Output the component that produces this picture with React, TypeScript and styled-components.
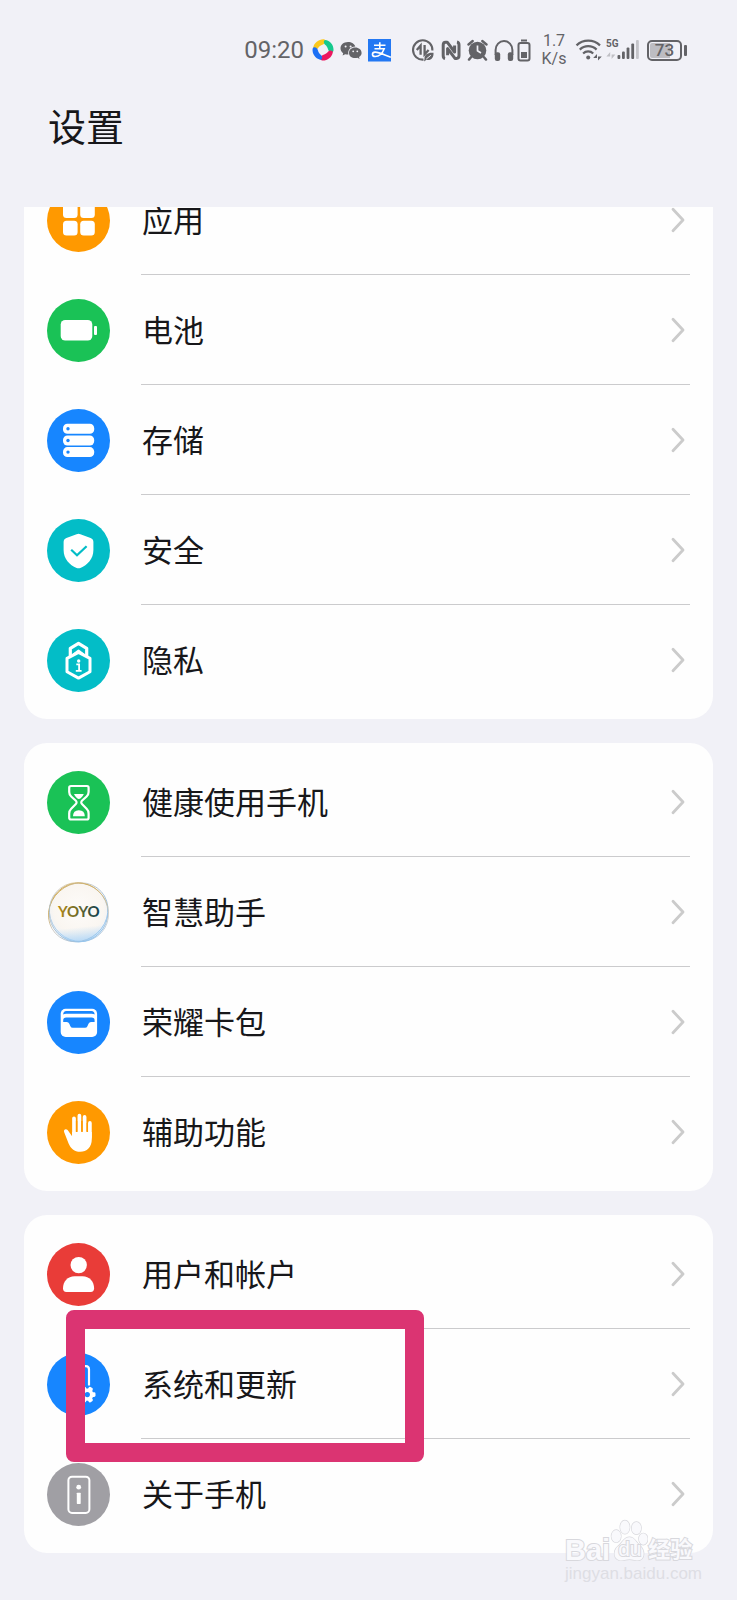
import React from "react";
import styled, { createGlobalStyle } from "styled-components";

const GlobalStyle = createGlobalStyle`
  * { box-sizing: border-box; }
  body {
    margin: 0;
    background: #f1f1f7;
    color: #17171a;
    font-family: Roboto, "Noto Sans CJK SC", sans-serif;
  }
`;

const Page = styled.div`
  position: relative;
  padding: 0 24px 47px;
`;

const StatusBar = styled.div`
  display: flex;
  align-items: center;
  justify-content: flex-end;
  height: 100px;
  padding-right: 26px;
  color: #636367;
`;

const Clock = styled.time`
  margin-right: 8px;
  font-size: 24px;
  line-height: 28px;
`;

const StatusGroup = styled.div<{ $gap: number; $after?: number }>`
  display: flex;
  align-items: center;
  gap: ${(p) => p.$gap}px;
  margin-right: ${(p) => p.$after ?? 0}px;
`;

const Glyph = styled.svg`
  display: block;
  flex: none;
`;

const Speed = styled.div`
  display: flex;
  flex-direction: column;
  align-items: center;
  width: 26px;
  font-size: 16px;
  line-height: 18px;
`;

const BatteryLevel = styled.div`
  display: flex;
  align-items: center;
  gap: 2px;
`;

const BatteryBody = styled.span`
  display: flex;
  align-items: center;
  justify-content: center;
  width: 35px;
  height: 21px;
  border: 2px solid #636367;
  border-radius: 5px;
  background: linear-gradient(to right, #bdbdc2 70%, transparent 70%) content-box;
  padding: 1px;
  font-size: 17px;
  font-weight: 500;
  line-height: 17px;
`;

const BatteryTip = styled.span`
  width: 3px;
  height: 11px;
  border-radius: 1px;
  background: #636367;
`;

const Title = styled.h1`
  margin: 0;
  padding: 0 24px;
  height: 107px;
  font-size: 38px;
  font-weight: 400;
  line-height: 56px;
`;

const Groups = styled.main`
  display: flex;
  flex-direction: column;
  gap: 24px;
`;

const Card = styled.ul<{ $scrolled?: boolean }>`
  margin: 0;
  padding: 4px 23px;
  list-style: none;
  background: #fefefe;
  border-radius: ${(p) => (p.$scrolled ? "0 0 23px 23px" : "23px")};
  overflow: ${(p) => (p.$scrolled ? "hidden" : "visible")};

  & > li:first-child {
    margin-top: ${(p) => (p.$scrolled ? "-46px" : "0")};
  }
`;

const Item = styled.li`
  position: relative;
`;

const RowLink = styled.a`
  display: flex;
  align-items: center;
  gap: 31px;
  height: 110px;
  color: inherit;
  text-decoration: none;
`;

const RowBody = styled.span<{ $last: boolean }>`
  display: flex;
  flex: 1;
  align-items: center;
  justify-content: space-between;
  height: 110px;
  padding-right: 5px;
  border-bottom: 1px solid ${(p) => (p.$last ? "transparent" : "#cbcbcd")};
`;

const Label = styled.span`
  padding: 4px 0 0 1px;
  font-size: 31px;
  line-height: 32px;
`;

const Highlight = styled.div`
  position: absolute;
  top: -19px;
  left: 19px;
  width: 358px;
  height: 152px;
  border: 19px solid #db3472;
  border-radius: 8px;
  pointer-events: none;
`;

const Watermark = styled.div`
  position: absolute;
  right: 40px;
  bottom: 14px;
  width: 132px;
  color: #f9f9fc;
  font-family: "Liberation Sans", "Noto Sans CJK SC", sans-serif;
  -webkit-text-stroke: 2px #d8d8dd;
  paint-order: stroke fill;
  pointer-events: none;
`;

const Brand = styled.div`
  display: flex;
  align-items: flex-end;
  height: 44px;
  font-weight: 700;
`;

const BrandText = styled.span<{ $size: number }>`
  font-size: ${(p) => p.$size}px;
  line-height: 24px;
`;

const Paw = styled.span`
  position: relative;
  display: flex;
  width: 38px;
  height: 44px;
`;

const PawText = styled.span`
  position: absolute;
  left: 8px;
  top: 19px;
  font-size: 21px;
  font-weight: 400;
  line-height: 24px;
`;

const Site = styled.div`
  font-size: 17px;
  line-height: 24px;
  color: #dedee4;
  -webkit-text-stroke: 0;
`;

const Disc = ({ color, children }: { color: string; children: React.ReactNode }) => (
  <Glyph width="63" height="63" viewBox="0 0 63 63" aria-hidden="true">
    <circle cx="31.5" cy="31.5" r="31.5" fill={color} />
    {children}
  </Glyph>
);

const ORANGE = "#ff9900";
const GREEN = "#1ac256";
const BLUE = "#1786ff";
const TEAL = "#03bdc7";
const RED = "#e93c38";
const GREY = "#a09fa4";

const AppsIcon = () => (
  <Disc color={ORANGE}>
    <g fill="#fff">
      <rect x="16" y="14.4" width="14.6" height="14.6" rx="3.5" />
      <rect x="33.2" y="14.4" width="14.6" height="14.6" rx="3.5" />
      <rect x="16" y="31.8" width="14.6" height="14.6" rx="3.5" />
      <rect x="33.2" y="31.8" width="14.6" height="14.6" rx="3.5" />
    </g>
  </Disc>
);

const BatteryIcon = () => (
  <Disc color={GREEN}>
    <rect x="13.7" y="21" width="31.6" height="20.6" rx="4.5" fill="#fff" />
    <rect x="47" y="27" width="3" height="9" rx="1" fill="#fff" />
  </Disc>
);

const StorageIcon = () => (
  <Disc color={BLUE}>
    {[14.8, 26.5, 38.1].map((y) => (
      <g key={y}>
        <rect x="16" y={y} width="31.2" height="10" rx="4.4" fill="#fff" />
        <circle cx="21" cy={y + 5} r="1.7" fill={BLUE} />
      </g>
    ))}
  </Disc>
);

const SecurityIcon = () => (
  <Disc color={TEAL}>
    <path d="M29.6 15.2Q31.5 14.3 33.4 15.2L43.6 19Q46.4 20 46.4 23V31C46.4 40 40.5 46 33.4 48.9Q31.5 49.7 29.6 48.9C22.5 46 16.6 40 16.6 31V23Q16.6 20 19.4 19Z" fill="#fff" />
    <path d="M24.2 30.8L30 36.3L39.6 27.2" fill="none" stroke={TEAL} strokeWidth="2.2" />
  </Disc>
);

const PrivacyIcon = () => (
  <Disc color={TEAL}>
    <g fill="none" stroke="#fff" strokeLinejoin="round">
      <path d="M23.3 28V19.3L31.5 14.3L39.7 19.3V28" strokeWidth="3.2" />
      <path d="M31.5 23.3L43 29.4V42.7L31.5 49.1L20 42.7V29.4Z" strokeWidth="3" />
      <path d="M26.2 25.5L31.5 21.5L36.8 25.5" strokeWidth="2" />
    </g>
    <circle cx="31.7" cy="32" r="1.7" fill="#fff" />
    <path d="M29.3 35.3H32.1V41.6M28.8 41.8H34.6" fill="none" stroke="#fff" strokeWidth="1.8" />
  </Disc>
);

const HourglassIcon = () => (
  <Disc color={GREEN}>
    <path
      d="M24 15H40Q41.6 15 41.6 16.7V21Q41.6 23.6 39.6 25.5L35.2 29.5Q33.3 31.4 35.2 33.3L39.6 37.8Q41.6 39.8 41.6 42.5V46.8Q41.6 48.5 40 48.5H24Q22.2 48.5 22.2 46.8V42.5Q22.2 39.8 24.2 37.8L28.6 33.3Q30.5 31.4 28.6 29.5L24.2 25.5Q22.2 23.6 22.2 21V16.7Q22.2 15 24 15Z"
      fill="none" stroke="#fff" strokeWidth="2.2"
    />
    <path d="M27 23.1H36.8Q35.9 25.7 33.7 27.2Q31.9 28.6 30.1 27.2Q27.9 25.7 27 23.1Z" fill="#fff" />
    <path d="M26 45.3Q26 39.2 31.9 39.2Q37.8 39.2 37.8 45.3Z" fill="#fff" />
  </Disc>
);

const YoyoIcon = () => (
  <Glyph width="63" height="63" viewBox="0 0 63 63" aria-hidden="true">
    <defs>
      <linearGradient id="bubbleRim" x1="0.3" y1="0" x2="0.6" y2="1">
        <stop offset="0" stopColor="#cfa544" />
        <stop offset="0.3" stopColor="#cfcac2" />
        <stop offset="0.75" stopColor="#a3c0da" />
        <stop offset="1" stopColor="#94c6f0" />
      </linearGradient>
      <radialGradient id="bubbleFill" cx="0.5" cy="0.45" r="0.55">
        <stop offset="0" stopColor="#fdfbf9" />
        <stop offset="0.75" stopColor="#faf6f1" />
        <stop offset="1" stopColor="#eef1f6" />
      </radialGradient>
      <linearGradient id="bubbleGlow" x1="0.4" y1="0" x2="0.5" y2="1">
        <stop offset="0.75" stopColor="#b5d8f6" stopOpacity="0" />
        <stop offset="1" stopColor="#b5d8f6" />
      </linearGradient>
      <linearGradient id="yoyoText" x1="0" y1="0" x2="1" y2="0">
        <stop offset="0" stopColor="#b88b17" />
        <stop offset="0.5" stopColor="#6c6928" />
        <stop offset="1" stopColor="#123f50" />
      </linearGradient>
    </defs>
    <circle cx="31.5" cy="31.5" r="29.8" fill="url(#bubbleFill)" />
    <circle cx="31.5" cy="31.5" r="29.8" fill="url(#bubbleGlow)" />
    <circle cx="31.5" cy="31.5" r="29.4" fill="none" stroke="url(#bubbleRim)" strokeWidth="1" />
    <ellipse cx="31.2" cy="31.3" rx="31" ry="28.2" transform="rotate(-42 31.2 31.3)" fill="none" stroke="url(#bubbleRim)" strokeWidth="0.9" />
    <ellipse cx="32" cy="31.1" rx="30.4" ry="28.6" transform="rotate(42 32 31.1)" fill="none" stroke="url(#bubbleRim)" strokeWidth="0.7" />
    <text x="31.8" y="36.4" textAnchor="middle" fontFamily="Lato, sans-serif" fontWeight="700" fontSize="15" fill="url(#yoyoText)">YOYO</text>
  </Glyph>
);

const WalletIcon = () => (
  <Disc color={BLUE}>
    <rect x="13.7" y="17.8" width="36.4" height="28.2" rx="5" fill="#fff" />
    <path d="M16.2 23.6Q16.2 20 19.4 20H44.4Q47.6 20 47.6 23.6Q46.6 22.7 44.6 22.7H19.2Q17.2 22.7 16.2 23.6Z" fill={BLUE} />
    <path d="M16.2 31V29.4Q16.2 26.6 19.2 26.6H44.6Q47.6 26.6 47.6 29.4V31H44Q42.3 31 41.5 32.8L40.4 35.3Q39.7 36.8 38 36.8H25.8Q24.1 36.8 23.4 35.3L22.3 32.8Q21.5 31 19.8 31Z" fill={BLUE} />
  </Disc>
);

const HandIcon = () => (
  <Disc color={ORANGE}>
    <g fill="none" stroke="#fff" strokeWidth="3.7" strokeLinecap="round">
      <path d="M27 17.3V34M32.4 14.7V34M37.6 15.9V34M42.9 21.9V36" />
    </g>
    <path d="M25.1 31H44.8V38C44.8 46.5 39.7 50.8 33.3 50.8C27.2 50.8 23.8 47.6 21.6 42.5L17.2 31.3C16.3 28.6 18.8 27.2 20.6 29L25.1 35.3Z" fill="#fff" />
    <path d="M29.6 20V30.4M34.9 20V30.4M40.3 22V30.4" stroke={ORANGE} strokeWidth="1.4" />
  </Disc>
);

const UserIcon = () => (
  <Disc color={RED}>
    <circle cx="31.7" cy="22.1" r="8.2" fill="#fff" />
    <path d="M16 45.3C16 38.5 20.7 33.2 27.6 33.2H35.5C42.4 33.2 47.1 38.5 47.1 45.3Q47.1 49 43.7 49H19.4Q16 49 16 45.3Z" fill="#fff" />
  </Disc>
);

const SystemIcon = () => (
  <Disc color={BLUE}>
    <path d="M42 32.5V16.4Q42 13.2 38.9 13.2H24.1Q21 13.2 21 16.4V46.6Q21 49.8 24.1 49.8H30" fill="none" stroke="#fff" strokeWidth="2.2" />
    <g fill="#fff">
      <circle cx="40.3" cy="41.6" r="6.2" />
      {[0, 60, 120, 180, 240, 300].map((a) => (
        <rect key={a} x="38" y="33.4" width="4.6" height="5" rx="1.4" transform={`rotate(${a + 30} 40.3 41.6)`} />
      ))}
    </g>
    <circle cx="40.3" cy="41.6" r="2.6" fill={BLUE} />
  </Disc>
);

const AboutIcon = () => (
  <Disc color={GREY}>
    <rect x="21.4" y="13.7" width="21" height="36.2" rx="3.6" fill="none" stroke="#fff" strokeWidth="2" />
    <circle cx="31.7" cy="24.2" r="2.4" fill="#fff" />
    <rect x="29.8" y="29.7" width="3.9" height="11.2" rx="0.6" fill="#fff" />
  </Disc>
);

const Chevron = () => (
  <Glyph width="14" height="26" viewBox="0 0 14 26" aria-hidden="true">
    <path d="M2 2.2L12 13L2 23.8" fill="none" stroke="#cbcbcb" strokeWidth="2.8" strokeLinecap="round" strokeLinejoin="round" />
  </Glyph>
);

type Entry = { label: string; icon: () => React.ReactElement; highlighted?: boolean };

const groups: { scrolled?: boolean; entries: Entry[] }[] = [
  {
    scrolled: true,
    entries: [
      { label: "应用", icon: AppsIcon },
      { label: "电池", icon: BatteryIcon },
      { label: "存储", icon: StorageIcon },
      { label: "安全", icon: SecurityIcon },
      { label: "隐私", icon: PrivacyIcon },
    ],
  },
  {
    entries: [
      { label: "健康使用手机", icon: HourglassIcon },
      { label: "智慧助手", icon: YoyoIcon },
      { label: "荣耀卡包", icon: WalletIcon },
      { label: "辅助功能", icon: HandIcon },
    ],
  },
  {
    entries: [
      { label: "用户和帐户", icon: UserIcon },
      { label: "系统和更新", icon: SystemIcon, highlighted: true },
      { label: "关于手机", icon: AboutIcon },
    ],
  },
];

const INK = "#636367";

const Status = () => (
  <StatusBar>
    <Clock>09:20</Clock>
    <StatusGroup $gap={6} $after={20}>
      <Glyph width="22" height="24" viewBox="0 0 22 24" aria-hidden="true">
        <path d="M1.2 9.8C2 4.6 7 1 12 1.3C15 2.2 13.4 5.6 11 6.6C8.2 7.6 7.4 8.6 5.8 10.4C4 12.2 1 12 1.2 9.8Z" fill="#fbc81e" />
        <path d="M13.8 2C18.8 3.2 22.2 8 21.4 13C20.2 15.8 17 14.4 16.2 11.8C15.4 9.2 14.8 8.2 12.8 6.6C11.2 4.8 11.6 1.8 13.8 2Z" fill="#16c98d" />
        <path d="M20.8 14.4C19.8 19.6 15 22.8 10 22.4C7 21.4 8.4 18 11 17C13.8 16 14.6 15.2 16.2 13.4C18 11.8 21 12.2 20.8 14.4Z" fill="#ec1760" />
        <path d="M8.2 21.8C3.2 20.4 0 15.8 .6 10.8C1.8 8.2 5 9.4 5.8 12C6.6 14.6 7.2 15.6 9.2 17.2C10.8 19 10.4 22 8.2 21.8Z" fill="#1c6ff5" />
      </Glyph>
      <Glyph width="22" height="24" viewBox="0 0 22 24" aria-hidden="true">
        <path d="M8 4C3.6 4 .5 6.8.5 10.3C.5 12.3 1.5 14 3.2 15.2L2.6 17.5L5.2 16.2C6.2 16.5 7.2 16.6 8.4 16.6C7.4 12 10.6 8.7 15.3 8.6C14.6 5.8 11.6 4 8 4Z" fill={INK} />
        <path d="M15.2 9.6C11.6 9.6 9 12 9 14.9C9 17.8 11.6 20.1 15.2 20.1C16 20.1 16.8 20 17.5 19.8L19.6 20.9L19 19C20.6 18 21.6 16.6 21.6 14.9C21.6 12 18.9 9.6 15.2 9.6Z" fill={INK} />
        <g fill="#f1f1f7">
          <circle cx="5.6" cy="8.4" r="1" /><circle cx="10.6" cy="8.4" r="1" />
          <circle cx="13.2" cy="13.3" r=".9" /><circle cx="17.3" cy="13.3" r=".9" />
        </g>
      </Glyph>
      <Glyph width="23" height="24" viewBox="0 0 23 24" aria-hidden="true">
        <rect y="1" width="23" height="22.5" fill="#2378f3" />
        <path d="M6 7.2H17.5M11.8 4.2V10.8M6.5 10.8H16.2C14.5 15.2 11 18.5 7.2 18.5C3.6 18.5 3.6 14.3 7 14.1C11 13.9 16 16.8 22.8 19.2" fill="none" stroke="#fff" strokeWidth="1.6" />
      </Glyph>
    </StatusGroup>
    <StatusGroup $gap={6} $after={10}>
      <Glyph width="24" height="24" viewBox="0 0 24 24" aria-hidden="true">
        <path d="M21.4 12.5A9.7 9.7 0 1 0 12.5 21.6" fill="none" stroke={INK} strokeWidth="2.1" />
        <path d="M9.6 16.8V7.6L5.8 12M13.6 7V16.4L17.6 12" fill="none" stroke={INK} strokeWidth="2.3" />
        <path d="M13.5 21C13.2 16.5 17 14.3 22.5 14.8C23 20 19.5 23 15.5 21.8L13 23.5Z" fill={INK} />
        <path d="M15.3 21L19.8 17.3" stroke="#f1f1f7" />
      </Glyph>
      <Glyph width="20" height="24" viewBox="0 0 20 24" aria-hidden="true">
        <path d="M4 20.6Q2.2 20.2 2.2 17.5V7Q2.2 4.2 4.6 4.2H6.2L13.6 14V7.6M16 4Q18 4.4 18 7V17.6Q18 20.4 15.6 20.4H14L6.6 10.6V17.2" fill="none" stroke={INK} strokeWidth="3" strokeLinejoin="round" />
      </Glyph>
      <Glyph width="21" height="24" viewBox="0 0 21 24" aria-hidden="true">
        <circle cx="10.5" cy="12.5" r="8.8" fill={INK} />
        <path d="M1.5 6.5L5.7 3M19.5 6.5L15.3 3M4.2 19L2 21.6M16.8 19L19 21.6" stroke={INK} strokeWidth="2.4" strokeLinecap="round" />
        <path d="M10.5 7.4V12.8L14 15" fill="none" stroke="#f1f1f7" strokeWidth="1.7" />
      </Glyph>
      <StatusGroup $gap={3}>
        <Glyph width="20" height="24" viewBox="0 0 20 24" aria-hidden="true">
          <path d="M1.6 17V12A8.4 9 0 0 1 18.4 12V17" fill="none" stroke={INK} strokeWidth="2" />
          <rect x=".8" y="14.2" width="5.4" height="8.8" rx="2.2" fill={INK} />
          <rect x="13.8" y="14.2" width="5.4" height="8.8" rx="2.2" fill={INK} />
        </Glyph>
        <Glyph width="14" height="24" viewBox="0 0 14 24" aria-hidden="true">
          <rect x="4" y="1.5" width="6" height="2" fill={INK} />
          <rect x="1.5" y="5" width="11" height="17.5" rx="2" fill="none" stroke={INK} strokeWidth="2" />
          <rect x="4" y="14" width="6" height="6" fill={INK} />
        </Glyph>
      </StatusGroup>
    </StatusGroup>
    <Speed>
      <span>1.7</span>
      <span>K/s</span>
    </Speed>
    <StatusGroup $gap={3} $after={7}>
      <Glyph width="36" height="24" viewBox="0 0 36 24" aria-hidden="true">
        <g fill="none" stroke={INK} strokeWidth="2.2">
          <path d="M9.5 7.4A17 17 0 0 1 33 7.4" />
          <path d="M12.8 11.6A12 12 0 0 1 29.6 11.6" />
          <path d="M16.1 15.5A7.3 7.3 0 0 1 26.2 15.5" />
        </g>
        <circle cx="21.2" cy="19.6" r="2" fill={INK} />
        <path d="M30 22V16L26.2 20H30ZM31 16V22.5L34.8 18.5H31Z" fill={INK} />
      </Glyph>
      <Glyph width="34" height="28" viewBox="0 0 34 28" aria-hidden="true">
        <text x="0" y="11" fontFamily="Roboto, sans-serif" fontWeight="700" fontSize="10" fill={INK}>5G</text>
        <path d="M4.2 23V16L.4 20.6H4.2ZM5.6 16V23L9.4 18.6H5.6Z" fill="#c0c0c5" />
        <g fill={INK}>
          <rect x="11.5" y="19" width="2.8" height="4" rx="1" />
          <rect x="16" y="15.5" width="2.8" height="7.5" rx="1" />
          <rect x="20.6" y="11.5" width="2.8" height="11.5" rx="1" />
          <rect x="25.3" y="7.5" width="2.8" height="15.5" rx="1" />
        </g>
        <rect x="30" y="4" width="2.8" height="19" rx="1" fill="#c5c5ca" />
      </Glyph>
    </StatusGroup>
    <BatteryLevel>
      <BatteryBody>73</BatteryBody>
      <BatteryTip />
    </BatteryLevel>
  </StatusBar>
);

export default function App() {
  return (
    <Page>
      <GlobalStyle />
      <Status />
      <Title>设置</Title>
      <Groups>
        {groups.map((group, g) => (
          <Card key={g} $scrolled={group.scrolled}>
            {group.entries.map(({ label, icon: Icon, highlighted }, i) => (
              <Item key={label}>
                <RowLink href="#">
                  <Icon />
                  <RowBody $last={i === group.entries.length - 1}>
                    <Label>{label}</Label>
                    <Chevron />
                  </RowBody>
                </RowLink>
                {highlighted && <Highlight />}
              </Item>
            ))}
          </Card>
        ))}
      </Groups>
      <Watermark>
        <Brand>
          <BrandText $size={29}>Bai</BrandText>
          <Paw>
            <Glyph width="38" height="44" viewBox="0 0 40 46" aria-hidden="true">
              <g fill="#f9f9fc" stroke="#d8d8dd" strokeWidth="1.4">
                <ellipse cx="6.5" cy="19" rx="5" ry="6.5" />
                <ellipse cx="15.7" cy="9.5" rx="5" ry="7" />
                <ellipse cx="27.8" cy="10.5" rx="5" ry="6.5" />
                <ellipse cx="35" cy="22" rx="4.6" ry="6" />
                <path d="M20.5 20C26 20 27.5 25.5 31.5 29C36.5 33 38 44.5 28.5 44.5C25.5 44.5 23.5 43.3 20.5 43.3S15.5 44.5 12.5 44.5C3 44.5 3 34 8.5 29.5C13 26 14.5 20 20.5 20Z" />
              </g>
            </Glyph>
            <PawText>du</PawText>
          </Paw>
          <BrandText $size={22}>经验</BrandText>
        </Brand>
        <Site>jingyan.baidu.com</Site>
      </Watermark>
    </Page>
  );
}
